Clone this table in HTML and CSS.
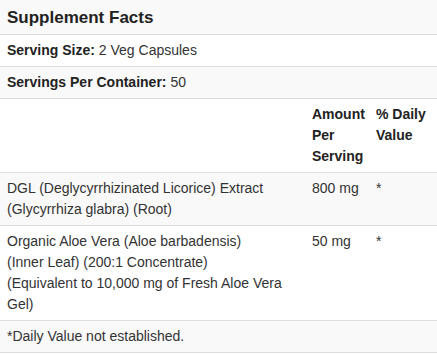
FILE: index.html
```html
<!DOCTYPE html>
<html>
<head>
<meta charset="utf-8">
<link rel="stylesheet" href="styles.css">
</head>
<body>
<div class="facts">
  <div class="title">Supplement Facts</div>
  <div class="row"><b>Serving Size:</b> 2 Veg Capsules</div>
  <div class="row alt"><b>Servings Per Container:</b> 50</div>
  <table class="tbl">
    <colgroup>
      <col>
      <col class="w2">
      <col class="w3">
    </colgroup>
    <tr class="head">
      <th></th>
      <th>Amount Per Serving</th>
      <th>% Daily Value</th>
    </tr>
    <tr class="alt">
      <td>DGL (Deglycyrrhizinated Licorice) Extract (Glycyrrhiza glabra) (Root)</td>
      <td>800 mg</td>
      <td>*</td>
    </tr>
    <tr>
      <td>Organic Aloe Vera (Aloe barbadensis)<br>(Inner Leaf) (200:1 Concentrate)<br>(Equivalent to 10,000 mg of Fresh Aloe Vera Gel)</td>
      <td>50 mg</td>
      <td>*</td>
    </tr>
  </table>
  <div class="row alt">*Daily Value not established.</div>
</div>
</body>
</html>
```

FILE: styles.css
```css
html, body {
  margin: 0;
  padding: 0;
  background: #fff;
}
.facts {
  font-family: "Liberation Sans", Arial, sans-serif;
  font-size: 14px;
  line-height: 21px;
  color: #333;
  width: 437px;
}
.title {
  background: #f9f9f9;
  font-size: 17px;
  font-weight: bold;
  color: #222;
  padding: 7px 7px 6px;
  line-height: 21px;
  border-bottom: 1px solid #ddd;
}
.row {
  padding: 5px 7px;
  border-bottom: 1px solid #ddd;
}
.row b {
  color: #222;
}
.alt {
  background: #f9f9f9;
}
.tbl {
  width: 100%;
  border-collapse: collapse;
  table-layout: fixed;
}
.tbl .w2 {
  width: 64px;
}
.tbl .w3 {
  width: 68px;
}
.tbl th, .tbl td {
  padding: 5px 7px;
  text-align: left;
  vertical-align: top;
  border-bottom: 1px solid #ddd;
}
.tbl th {
  color: #222;
}
```
